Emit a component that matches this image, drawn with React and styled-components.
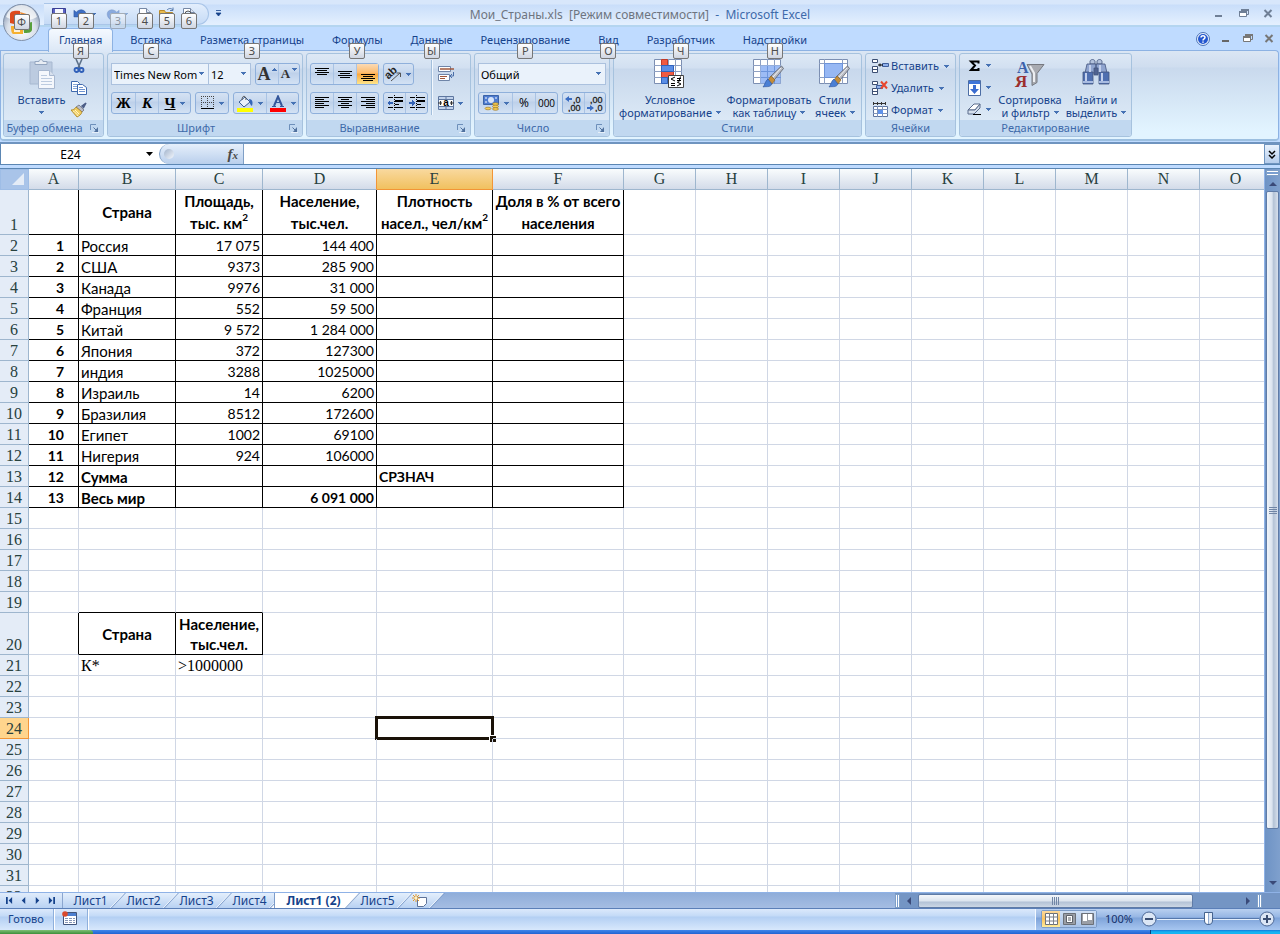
// src/App.jsx
import React from 'react';
import styled, { createGlobalStyle, css } from 'styled-components';

const GlobalStyle = createGlobalStyle`
  * {
    box-sizing: border-box;
  }

  body {
    margin: 0;
    overflow: hidden;
    font-family: 'Noto Sans', 'Open Sans', sans-serif;
    font-size: 11px;
    color: #15428b;
  }

  button, input, select {
    font: inherit;
    color: inherit;
    margin: 0;
    padding: 0;
    border: 0;
    background: none;
    outline: none;
  }

  svg {
    display: block;
    flex: none;
  }
`;

const Window = styled.div`
  position: relative;
  display: flex;
  flex-direction: column;
  height: 100vh;
  background: #bfdbff;
`;

/* ---------- title bar ---------- */

const TitleBar = styled.header`
  display: grid;
  grid-template-columns: 1fr auto 1fr;
  align-items: center;
  flex: none;
  height: 27px;
  padding: 2px 4px 0;
  background: linear-gradient(#d8e7fb 0 4px, #c9defa 5px, #e3effe 24px);
  border-bottom: 2px solid #b4d5f0;
`;

const TitleLeft = styled.div`
  display: flex;
  align-items: center;
  padding-left: 40px;
`;

const QuickAccess = styled.div`
  display: flex;
  gap: 6px;
  height: 22px;
  width: 165px;
  padding: 3px 0 0 7px;
  border: 1px solid #a9c5e8;
  border-left: 0;
  border-radius: 0 11px 11px 0;
  background: linear-gradient(#e3eefc, #c6dbf6);
`;

const QuickButton = styled.button`
  position: relative;
  display: flex;
  align-items: flex-start;
  width: ${({ $wide }) => ($wide ? '26px' : '16px')};
  opacity: ${({ disabled }) => (disabled ? 0.5 : 1)};

  > svg + svg {
    margin: 6px 0 0 3px;
  }
`;

const MoreButton = styled.button`
  padding: 4px;
  margin-left: 2px;
`;

const KeyTip = styled.kbd`
  position: absolute;
  top: ${({ $top }) => $top || 6}px;
  left: 50%;
  z-index: 3;
  width: 16px;
  height: 16px;
  margin-left: -8px;
  border: 1px solid #767676;
  border-radius: 2px;
  background: linear-gradient(#ffffff, #d0d6e2);
  color: #4c4c4c;
  font-family: 'Noto Sans', sans-serif;
  font-size: 11px;
  line-height: 14px;
  text-align: center;
`;

const WindowTitle = styled.h1`
  margin: 0;
  padding-top: 2px;
  font-size: 12px;
  font-weight: 400;
  line-height: 18px;
  white-space: pre;
  color: #6e7580;

  span {
    color: #3e6aaa;
  }
`;

const WindowControls = styled.div`
  display: flex;
  align-items: center;
  gap: ${({ $gap }) => $gap}px;
  margin-left: auto;
`;

const ControlButton = styled.button`
  width: 16px;
  height: 16px;
`;

const OfficeButton = styled.button`
  position: absolute;
  top: 2px;
  left: 2px;
  z-index: 4;
  width: 39px;
  height: 39px;
`;

/* ---------- ribbon ---------- */

const TabStrip = styled.nav`
  display: flex;
  flex: none;
  height: 23px;
  padding: 1px 3px 0 45px;
`;

const RibbonTab = styled.button`
  position: relative;
  z-index: 2;
  height: 24px;
  margin: 0 3px;
  padding: 0 10px 2px;
  line-height: 20px;
  border: 1px solid transparent;
  border-bottom: 0;
  border-radius: 4px 4px 0 0;
  white-space: nowrap;

  ${({ $active }) =>
    $active &&
    css`
      border-color: #8db2e3;
      background: linear-gradient(#f4f9ff, #dbe7f6);
    `}
`;

const Ribbon = styled.section`
  display: flex;
  gap: 3px;
  flex: none;
  height: 91px;
  margin-right: 1px;
  padding: 2px;
  border: 1px solid #8db2e3;
  border-radius: 0 4px 4px 4px;
  border-bottom: 2px solid #9cbfe0;
  background: linear-gradient(#dbe6f4, #cfddef 16px, #c9d9ed 17px, #e2f4ff 80px);
`;

const GroupBox = styled.div`
  display: flex;
  flex-direction: column;
  flex: none;
  width: ${({ $width }) => $width}px;
  border: 1px solid #a6c2de;
  border-radius: 3px;
  background: linear-gradient(#dde8f5, #d2e0f1 14px, #c8d8ec 15px, #dce9f6 68px);
`;

const GroupContent = styled.div`
  display: flex;
  flex: 1;
  min-height: 0;
`;

const GroupLabel = styled.div`
  display: flex;
  align-items: center;
  height: 16px;
  background: #c1d8f0;
  border-radius: 0 0 3px 3px;
  color: #3e6aaa;
  line-height: 18px;

  span {
    flex: 1;
    padding-right: ${({ $launcher }) => ($launcher ? '5px' : '0')};
    text-align: center;
    white-space: nowrap;
  }

  button {
    margin-right: 4px;
  }
`;

const Stack = styled.div`
  display: flex;
  flex-direction: column;
  gap: ${({ $gap }) => $gap || 0}px;
  padding: ${({ $padding }) => $padding || '9px 3px 0'};
`;

const Row = styled.div`
  display: flex;
  gap: 4px;
`;

const ButtonSet = styled.div`
  display: flex;
  height: 22px;
  border: 1px solid #8fb0db;
  border-radius: 3px;
  background: linear-gradient(#d5e2f3, #c7d8ee 8px, #bdd0ea 9px, #d3e2f4);
`;

const ToolButton = styled.button`
  display: flex;
  align-items: center;
  justify-content: center;
  gap: ${({ $gap }) => $gap || 4}px;
  width: ${({ $width }) => $width || 22}px;
  background: ${({ $active }) =>
    $active ? 'linear-gradient(#fbdab5, #fdbb6c 9px, #fba63c 10px, #fde58b)' : 'none'};

  & + & {
    border-left: 1px solid #a9c3e4;
  }
`;

const Glyph = styled.span`
  color: ${({ $color }) => $color || '#000'};
  font-family: ${({ $sans }) =>
    $sans ? "'Open Sans', sans-serif" : "'Liberation Serif', serif"};
  font-size: ${({ $size }) => $size || 15}px;
  font-weight: ${({ $sans }) => ($sans ? 400 : 700)};
  font-style: ${({ $italic }) => ($italic ? 'italic' : 'normal')};
  text-decoration: ${({ $underline }) => ($underline ? 'underline' : 'none')};
  line-height: 18px;
`;

const Raised = styled.span`
  align-self: flex-start;
  padding-top: 4px;
`;

const SelectBox = styled.div`
  position: relative;
  width: ${({ $width }) => $width}px;
  height: 22px;
  border: 1px solid #abc1de;
  background: #eaf2fb;

  & + & {
    margin-left: -5px;
  }

  select {
    display: block;
    width: 100%;
    height: 20px;
    padding: 0 8px 0 2px;
    appearance: none;
    color: #000;
  }

  svg {
    position: absolute;
    top: 8px;
    right: 4px;
    pointer-events: none;
  }
`;

const Separator = styled.div`
  width: 2px;
  margin: 6px 0 5px;
  background: #a3bfdc;
  border-right: 1px solid #f2f8fe;
`;

const PlainButton = styled.button`
  display: flex;
  align-items: center;
  gap: ${({ $gap }) => $gap || 4}px;
  height: 22px;
  line-height: 22px;
  white-space: nowrap;
`;

const BigButton = styled.button`
  display: flex;
  flex-direction: column;
  align-items: center;
  flex: none;
  width: ${({ $width }) => $width}px;
  padding-top: 5px;
  line-height: 13px;
  white-space: nowrap;

  > svg {
    margin-bottom: 3px;
  }
`;

const CaptionLine = styled.span`
  display: flex;
  align-items: center;
  gap: 4px;
  height: 13px;
`;

/* ---------- formula bar ---------- */

const FormulaBar = styled.div`
  display: flex;
  flex: none;
  height: 23px;
  margin-top: 1px;
  border-top: 2px solid #6f94bf;
  border-bottom: 1px solid #5b86b3;
  background: #fff;
`;

const NameBox = styled.div`
  display: flex;
  align-items: center;
  width: 159px;
  border-left: 1px solid #5b86b3;

  input {
    width: 139px;
    text-align: center;
    font-size: 12px;
    color: #000;
  }

  button {
    padding: 6px;
  }
`;

const FunctionPill = styled.div`
  display: flex;
  align-items: center;
  justify-content: space-between;
  width: 85px;
  padding: 0 5px 0 4px;
  border: 1px solid #7f9fc6;
  border-width: 0 1px 0 1px;
  border-radius: 10px 0 0 10px;
  background: linear-gradient(#e6effb, #b9cfec);
`;

const Knob = styled.span`
  width: 10px;
  height: 10px;
  border-radius: 50%;
  background: linear-gradient(135deg, #a2b3cb, #f4f8fd);
`;

const FxButton = styled.button`
  font-family: 'Liberation Serif', serif;
  font-size: 15px;
  font-style: italic;
  font-weight: 700;
  line-height: 18px;
  color: #4a4a4a;

  small {
    font-size: 11px;
  }
`;

const FormulaInput = styled.input`
  flex: 1;
  min-width: 0;
`;

const ExpandButton = styled.button`
  display: flex;
  align-items: center;
  justify-content: center;
  width: 16px;
  border: 1px solid #6f94bf;
  background: linear-gradient(#e9f2fd, #b5cdec);
`;

/* ---------- sheet ---------- */

const SheetArea = styled.main`
  display: flex;
  flex: 1;
  min-height: 0;
  margin-top: 3px;
  border-top: 1px solid #5b86b3;
`;

const SheetView = styled.div`
  flex: 1;
  min-width: 0;
  overflow: hidden;
  background: #fff;
`;

/* the last column runs a little under the scroll bar */
const SheetTable = styled.table`
  width: calc(100% + 8px);
  table-layout: fixed;
  border-spacing: 0;
  color: #000;
  font-family: Lato, 'Open Sans', sans-serif;
  font-size: 14px;
`;

const headText = css`
  padding: 0;
  font-family: 'Liberation Serif', serif;
  font-size: 16px;
  font-weight: 400;
  color: #27413e;
`;

const ColumnHead = styled.th`
  ${headText}
  height: 21px;
  line-height: 20px;
  border-right: 1px solid ${({ $active }) => ($active ? '#f29536' : '#9eb6ce')};
  border-bottom: 1px solid ${({ $active }) => ($active ? '#f29536' : '#9eb6ce')};
  background: ${({ $active }) =>
    $active ? 'linear-gradient(#f9d99f, #f1c15f)' : 'linear-gradient(#f9fcfd, #d3dbe9)'};
  ${({ $beforeActive }) => $beforeActive && 'border-right-color: #f29536;'}
`;

const Corner = styled.th`
  height: 21px;
  padding: 0 4px 2px 0;
  border: 1px solid #9ebde6;
  background: #a9c4e9;

  svg {
    margin-left: auto;
  }
`;

const RowHead = styled.th`
  ${headText}
  height: ${({ $height }) => $height}px;
  line-height: 19px;
  vertical-align: bottom;
  border-right: 1px solid ${({ $active }) => ($active ? '#f29536' : '#9eb6ce')};
  border-bottom: 1px solid ${({ $active }) => ($active ? '#f29536' : '#9eb6ce')};
  background: ${({ $active }) => ($active ? '#ffd58d' : '#e4ecf7')};
`;

const Cell = styled.td`
  position: relative;
  padding: 0 2px;
  line-height: ${({ $line }) => $line || 18}px;
  vertical-align: ${({ $head }) => ($head ? 'middle' : 'bottom')};
  text-align: ${({ $align }) => $align || 'left'};
  font-weight: ${({ $bold }) => ($bold ? 700 : 400)};
  white-space: ${({ $head }) => ($head ? 'pre' : 'nowrap')};
  border-right: 1px solid ${({ $right }) => ($right ? '#000' : '#d0d7e5')};
  border-bottom: 1px solid ${({ $bottom }) => ($bottom ? '#000' : '#d0d7e5')};
  ${({ $indent }) => $indent && 'padding-right: 14px;'}
  ${({ $large }) => $large && 'font-size: 15px;'}
  ${({ $serif }) =>
    $serif && "font-family: 'Liberation Serif', serif; font-size: 16px;"}

  sup {
    font-size: 10px;
    line-height: 0;
    vertical-align: 8px;
  }
`;

const Selection = styled.div`
  position: absolute;
  inset: -2px;
  border: 3px solid #1a1208;

  &::after {
    content: '';
    position: absolute;
    right: -5px;
    bottom: -5px;
    width: 6px;
    height: 6px;
    background: #1a1208;
    background-clip: padding-box;
    border: solid #fff;
    border-width: 1px 0 0 1px;
  }
`;

/* ---------- scroll bars ---------- */

const VerticalBar = styled.div`
  display: flex;
  flex-direction: column;
  width: 16px;
  padding: 1px 0 2px 1px;
  border-left: 1px solid #8fb2e6;
  background: linear-gradient(90deg, #6e93c5, #7fa0cd);
`;

const SplitHandle = styled.span`
  flex: none;
  border: 1px solid #7f9fc6;
  background: linear-gradient(#fff 1px, #7a9fd0 1px 3px, #fff 3px);
  height: ${({ $vertical }) => ($vertical ? '14px' : '6px')};
  width: ${({ $vertical }) => ($vertical ? '5px' : '13px')};
  ${({ $vertical }) =>
    $vertical && 'background: linear-gradient(90deg, #fff 1px, #7a9fd0 1px 2px, #fff 2px);'}
`;

const ScrollArrow = styled.button`
  display: flex;
  align-items: center;
  justify-content: center;
  flex: none;
  width: ${({ $horizontal }) => ($horizontal ? '18px' : '14px')};
  height: 15px;
`;

const VerticalThumb = styled.div`
  display: flex;
  align-items: center;
  justify-content: center;
  flex: 638 0 0;
  width: 13px;
  border: 1px solid #5f7ba6;
  border-radius: 2px;
  background: linear-gradient(90deg, #f1f5fa, #dbe4ef 45%, #b4c3d6 60%, #d7e0ec);
`;

const VerticalTrack = styled.div`
  flex: 46 0 0;
`;

const BottomBar = styled.div`
  display: flex;
  flex: none;
  height: 17px;
  border-top: 1px solid #8fb2e6;
  border-bottom: 1px solid #5b7fb8;
  background: linear-gradient(#8fadd9, #a5bde3);
`;

const SheetNav = styled.div`
  position: relative;
  z-index: 2;
  display: flex;
  align-items: center;
  width: 63px;
  padding: 0 3px;
  border-right: 1px solid #8ba6cf;
  background: linear-gradient(#e0ecfb, #b9d2f3);

  button {
    width: 14px;
    padding-left: 3px;
  }
`;

const SheetTabs = styled.div`
  display: flex;
  padding-left: 3px;
`;

const SheetTab = styled.button`
  position: relative;
  z-index: ${({ $active }) => ($active ? 1 : 0)};
  width: ${({ $width }) => $width || 53}px;
  padding-right: 4px;
  font-size: 12px;
  line-height: 15px;
  font-weight: ${({ $active }) => ($active ? 700 : 400)};
  text-align: center;
  white-space: nowrap;

  &::before {
    content: '';
    position: absolute;
    inset: 0 0 0 ${({ $first }) => ($first ? '-14px' : '0')};
    z-index: -1;
    transform: skewX(-43deg);
    border-right: 1px solid #7d9cc9;
    background: ${({ $active }) =>
      $active ? '#fff' : 'linear-gradient(#e4effc, #b8d1f2)'};
    box-shadow: inset -1px 0 #fff;
  }

  ${({ $active }) =>
    $active &&
    css`
      &::after {
        content: '';
        position: absolute;
        inset: 0 auto 0 -4px;
        z-index: -1;
        width: 13px;
        border-left: 1px solid #7d9cc9;
        background: #fff;
      }
    `}

  svg {
    margin: 0 auto;
  }
`;

const HorizontalBar = styled.div`
  display: flex;
  align-items: center;
  width: 385px;
  margin-left: auto;
  background: #7495c4;
`;

const HorizontalThumb = styled.div`
  display: flex;
  align-items: center;
  justify-content: center;
  flex: 276 0 0;
  height: 14px;
  border: 1px solid #5f7ba6;
  border-radius: 2px;
  background: linear-gradient(#f4f7fb, #dce4ee 6px, #b3c2d6 7px, #ccd7e5);
`;

const HorizontalTrack = styled.div`
  flex: 46 0 0;
`;

/* ---------- status bar ---------- */

const StatusBar = styled.footer`
  display: flex;
  align-items: stretch;
  flex: none;
  height: 21px;
  background: linear-gradient(#dce9fb, #c3daf7 7px, #b3cff3 8px, #d8e8fc);
  line-height: 18px;
`;

const StatusItem = styled.div`
  display: flex;
  align-items: center;
  padding: 0 9px 2px 8px;
  border-right: 1px solid #8fb0dc;
  box-shadow: 1px 0 #fff;
`;

const StatusRight = styled.div`
  display: flex;
  align-items: center;
  width: 245px;
  margin-left: auto;
  padding: 0 5px 2px;
  border-left: 1px solid #f4f9ff;
  background: linear-gradient(#b9d0f0, #96b6e4 8px, #7ea3d9 9px, #a7c6f0);
`;

const ViewButtons = styled.div`
  display: flex;
  height: 18px;
  border: 1px solid #7c9cc8;
  border-radius: 2px;
`;

const ViewButton = styled.button`
  display: flex;
  align-items: center;
  justify-content: center;
  width: 18px;
  background: ${({ $active }) =>
    $active ? 'linear-gradient(#fbd89d, #fbc45f 8px, #fdeb9b)' : 'linear-gradient(#cfdff4, #a9c3e8)'};
`;

const ZoomValue = styled.button`
  width: 44px;
  color: #15326b;
`;

const ZoomSlider = styled.input`
  flex: 1;
  min-width: 0;
  height: 16px;
  appearance: none;
  background: linear-gradient(transparent 7px, #5678ac 7px 8px, #e4effc 8px 9px, transparent 9px);

  &::-webkit-slider-thumb {
    appearance: none;
    width: 9px;
    height: 13px;
    border: 1px solid #46648f;
    border-radius: 1px 1px 5px 5px;
    background: linear-gradient(90deg, #fff 3px, #8fa9cf 3px 4px, #dfe9f6 4px);
  }
`;

const TaskStrip = styled.div`
  display: flex;
  flex: none;
  height: 4px;
  background: linear-gradient(#3f86ea, #2163d2);

  &::before {
    content: '';
    width: 93px;
    border-radius: 0 3px 0 0;
    background: linear-gradient(#7fbf77, #3c8f3a);
  }

  &::after {
    content: '';
    width: 129px;
    margin-left: auto;
    border-left: 1px solid #0a3f7c;
    background: linear-gradient(#1379d9, #15b4f2 2px);
  }
`;

/* ---------- icons ---------- */

const Arrow = ({ up }) => (
  <svg width="5" height="3" viewBox="0 0 5 3" shapeRendering="crispEdges">
    <path d={up ? 'M0 3h5V2H4V1H3V0H2v1H1v1H0z' : 'M0 0h5v1H4v1H3v1H2V2H1V1H0z'} fill="#4672b4" />
  </svg>
);

const Launcher = () => (
  <svg width="9" height="9" viewBox="0 0 9 9" fill="none">
    <path d="M.5 6V.5H6" stroke="#6d8fba" />
    <path d="M3.500 3.500l3 3" stroke="#50719e" />
    <path d="M4 8h4V3z" fill="#50719e" />
    <path d="M2 8.500h7" stroke="#fff" opacity=".6" />
  </svg>
);

const WinIcon = ({ kind, color = '#6f7f96' }) => (
  <svg width="16" height="16" viewBox="0 0 16 16" fill="none">
    {kind === 'min' && <path d="M5 10h7" stroke={color} strokeWidth="2" />}
    {kind === 'restore' && (
      <>
        <path d="M6.500 5V4.500h7v4H12" stroke={color} />
        <path d="M6 4h8" stroke={color} strokeWidth="2" />
        <path d="M4.500 6.500h7v4h-7z" fill="#fff" stroke={color} />
        <path d="M4 6h8" stroke={color} strokeWidth="2" />
      </>
    )}
    {kind === 'close' && <path d="M4.500 4l7 7M11.500 4l-7 7" stroke={color} strokeWidth="2" />}
  </svg>
);

const HelpIcon = () => (
  <svg width="16" height="16" viewBox="0 0 16 16">
    <circle cx="8" cy="8" r="6.500" fill="#e6effb" stroke="#4d74b8" />
    <circle cx="8" cy="8" r="5" fill="#2457cf" />
    <path d="M6 6.500c0-2.500 4-2.500 4 0 0 1.500-2 1.300-2 3M8 10.500v1.200" stroke="#fff" strokeWidth="1.500" fill="none" />
  </svg>
);

const OfficeLogo = () => (
  <svg width="39" height="39" viewBox="0 0 39 39">
    <defs>
      <radialGradient id="orb" cx="50%" cy="70%" r="65%">
        <stop offset="0" stopColor="#ffffff" />
        <stop offset=".6" stopColor="#d9e0ea" />
        <stop offset="1" stopColor="#8a9ab3" />
      </radialGradient>
    </defs>
    <circle cx="19.500" cy="20.500" r="18" fill="url(#orb)" stroke="#7f8fa8" />
    <path d="M4 15a16 16 0 0 1 31 0c-9 5-22 5-31 0z" fill="#fff" opacity=".75" />
    <path d="M8 12c0-3 5-4 10-3v7l-6 6-4-1z" fill="#dd4a1c" />
    <path d="M18 10l10 3v7h-7z" fill="#f08b2e" />
    <path d="M9 24h12v8H11c-2-1-2-5-2-8z" fill="#f6b02f" />
    <path d="M21 22l9-2v8c-1 3-4 3-8 3z" fill="#58a03c" />
    <path d="M12 25h6v5h-6zM23 24h4v4h-4z" fill="#fff" opacity=".8" />
  </svg>
);

const SaveIcon = () => (
  <svg width="16" height="16" viewBox="0 0 16 16">
    <path d="M1.500 1.500h13v13h-13z" fill="#5a62c4" stroke="#3a3f94" />
    <path d="M4 2h8v6H4z" fill="#f5f7ff" />
    <path d="M4 10h8v4H4z" fill="#c9cff0" />
  </svg>
);

const UndoIcon = ({ flip }) => (
  <svg width="15" height="16" viewBox="0 0 16 16">
    <g transform={flip ? 'translate(16 0) scale(-1 1)' : undefined}>
      <path d="M1 3v7h7L5.500 7.500C8 4.500 12 6 11 10l-1 3c5-3 5-10-1-10.500-2.500 0-4 1-5.500 2.500z" fill="#3f6fc4" stroke="#2c559f" strokeWidth=".6" />
    </g>
  </svg>
);

const PageIcon = ({ lens }) => (
  <svg width="16" height="16" viewBox="0 0 16 16">
    <path d="M2.500 1.500h7l4 4v9h-11z" fill="#fff" stroke="#7688a5" />
    <path d="M9.500 1.500v4h4" fill="#dfe6f2" stroke="#7688a5" />
    {lens && <circle cx="7" cy="7" r="3" fill="#dcebfb" stroke="#555" />}
  </svg>
);

const FolderIcon = () => (
  <svg width="16" height="16" viewBox="0 0 16 16">
    <path d="M.5 3.500h5l1 2h7v9H.5z" fill="#e9bb50" stroke="#b98a2a" />
    <path d="M.5 14.500l2.500-7h12.500l-2.500 7z" fill="#fbe08f" stroke="#b98a2a" />
    <path d="M8 3c2-2 4-2 6 0m0-2.500V3.500h-3" stroke="#5579ae" fill="none" />
  </svg>
);

const PasteIcon = () => (
  <svg width="28" height="31" viewBox="0 0 28 31">
    <path d="M2 3h22v22H2z" fill="#bccbe0" stroke="#a7b8d0" />
    <path d="M7 2.500h4c0-2.500 4-2.500 4 0h4v3H7z" fill="#e8edf4" stroke="#93a5bf" />
    <path d="M10.500 11.500h11l5 5v13h-16z" fill="#f4f7fc" stroke="#a8b8d0" />
    <path d="M21.500 11.500v5h5" fill="#d8e1ee" stroke="#a8b8d0" />
    <path d="M13 16.500h6M13 19.500h11M13 22.500h11M13 25.500h11" stroke="#bccbe0" />
  </svg>
);

const CutIcon = () => (
  <svg width="16" height="16" viewBox="0 0 16 16" fill="none">
    <path d="M5 1l4 9M11 1L7 10" stroke="#5c7089" strokeWidth="1.600" />
    <circle cx="5.500" cy="12" r="2" stroke="#2f5fb8" strokeWidth="1.800" />
    <circle cx="10.500" cy="12" r="2" stroke="#2f5fb8" strokeWidth="1.800" />
  </svg>
);

const CopyIcon = () => (
  <svg width="16" height="16" viewBox="0 0 16 16">
    <path d="M.5 1.500h6l2 2v8h-8z" fill="#fff" stroke="#3f69ad" />
    <path d="M2 4.500h4M2 6.500h5M2 8.500h5" stroke="#86a6d6" />
    <path d="M6.500 4.500h5l4 3v7h-9z" fill="#fff" stroke="#3f69ad" />
    <path d="M8 7.500h4M8 9.500h6M8 11.500h6" stroke="#6f94d0" />
  </svg>
);

const BrushIcon = () => (
  <svg width="16" height="16" viewBox="0 0 16 16">
    <path d="M15 1l-4 3 1.500 1.500z" fill="#4c5d86" stroke="#4c5d86" strokeWidth="1.500" />
    <path d="M8 3l5 5-2 2-6-5z" fill="#b9bcc8" stroke="#6f7480" strokeWidth=".8" />
    <path d="M5 5l6 5c-1 3-3 4-5 5L0 8c2 0 4-1 5-3z" fill="#f0cd62" stroke="#a8821f" strokeWidth=".8" />
    <path d="M2 9c2 1 4 3 5 5M4 8l4 4" stroke="#fff5c4" fill="none" />
  </svg>
);

const BorderIcon = () => (
  <svg width="14" height="14" viewBox="0 0 14 14">
    <path d="M.5 0v12M6.500 0v12M12.500 0v12M0 .5h13M0 6.500h13" stroke="#444" strokeDasharray="1 1" />
    <path d="M0 12.500h13" stroke="#000" />
  </svg>
);

const FillIcon = () => (
  <svg width="17" height="17" viewBox="0 0 17 17">
    <path d="M2 7l6-5 5 5-6 5z" fill="#e9f0fa" stroke="#3c5d91" />
    <path d="M5 5c0-5 4-5 4 0" fill="none" stroke="#555" />
    <path d="M12 4c4 0 4 4 3 7-2-1-2-3-3-7z" fill="#3566b8" />
    <path d="M0 13h16v4H0z" fill="#ffff00" />
  </svg>
);

const FontColorIcon = () => (
  <svg width="17" height="17" viewBox="0 0 17 17">
    <path d="M4 11l4-9.500 4 9.500" stroke="#34579b" strokeWidth="2" fill="none" />
    <path d="M5.500 7.500h5M2 11.500h4M10 11.500h4" stroke="#34579b" fill="none" />
    <path d="M0 13h16v4H0z" fill="#ff0000" />
  </svg>
);

const LinesIcon = ({ lines, offset = 0 }) => (
  <svg width="14" height="16" viewBox="0 0 14 16" shapeRendering="crispEdges">
    {lines.map(([x, w], i) => (
      <rect key={i} x={x} y={offset + i * 2} width={w} height="1" fill="#000" />
    ))}
  </svg>
);

const IndentIcon = ({ right }) => (
  <svg width="16" height="16" viewBox="0 0 16 16" shapeRendering="crispEdges">
    <path d="M1 2.500h5M8 2.500h8M8 9.500h4M8 12.500h8M1 12.500h5" stroke="#000" />
    <path d="M8 6h8" stroke="#000" strokeWidth="2" />
    <path d="M7.500 0v16" stroke="#000" strokeDasharray="1 1" />
    <path d={right ? 'M0 7h3V5l3 3-3 3V9H0z' : 'M6 7H3V5L0 8l3 3V9h3z'} fill="#3262b5" />
  </svg>
);

const OrientationIcon = () => (
  <svg width="16" height="16" viewBox="0 0 16 16" overflow="visible">
    <text x="1" y="12" transform="rotate(-45 4 11)" fontFamily="Liberation Sans, sans-serif" fontSize="11" fontWeight="700" fill="#222">ab</text>
    <path d="M5 15l9-8M14.500 7h-4M14.500 7v4" stroke="#555" fill="none" />
  </svg>
);

const WrapIcon = () => (
  <svg width="17" height="16" viewBox="0 0 17 16" fill="none">
    <path d="M.5 .5h12v5H.5z" fill="#fff" stroke="#6f85a8" />
    <path d="M2 3h14" stroke="#a0583c" strokeWidth="1.500" />
    <path d="M.5 8.500h11v6H.5z" fill="#fff" stroke="#6f85a8" />
    <path d="M2 10.500h7M2 12.500h5" stroke="#a0583c" />
    <path d="M15.500 6v4h-3m1.500-2l-2 2 2 2" stroke="#4a6ea8" />
  </svg>
);

const MergeIcon = () => (
  <svg width="16" height="16" viewBox="0 0 16 16">
    <path d="M.5 1.500h15v13H.5z" fill="#fff" stroke="#5e77a0" />
    <path d="M1 2h14v2H1zM1 12h14v2H1z" fill="#c2d3ec" />
    <path d="M1 4.500h14M1 11.500h14M8 1v3M8 12v3" stroke="#5e77a0" />
    <path d="M0 8h4M2.500 6v4M12 8h4M13.500 6v4" stroke="#333" strokeWidth="1.200" />
    <text x="8" y="11" textAnchor="middle" fontFamily="Liberation Sans, sans-serif" fontSize="10" fontWeight="700" fill="#000">a</text>
  </svg>
);

const MoneyIcon = () => (
  <svg width="17" height="16" viewBox="0 0 17 16">
    <path d="M.5 .5h15v9H.5z" fill="#4f7cd0" stroke="#3b63a8" />
    <circle cx="8" cy="5" r="3" fill="#d6e4fa" />
    <path d="M2 3h2M12 3h2M2 7h2" stroke="#fff" />
    <ellipse cx="12.500" cy="9" rx="3" ry="1.300" fill="#f8cf57" stroke="#99701a" strokeWidth=".6" />
    <ellipse cx="12.500" cy="11.500" rx="3" ry="1.300" fill="#f8cf57" stroke="#99701a" strokeWidth=".6" />
    <ellipse cx="12.500" cy="14" rx="3" ry="1.300" fill="#f8cf57" stroke="#99701a" strokeWidth=".6" />
    <ellipse cx="5" cy="13.500" rx="3" ry="1.300" fill="#f8cf57" stroke="#99701a" strokeWidth=".6" />
  </svg>
);

const DecimalIcon = ({ less }) => (
  <svg width="17" height="17" viewBox="0 0 17 17" fontFamily="Liberation Sans, sans-serif" fontSize="9">
    <text x={less ? 3 : 8} y="8" fill="#222" stroke="#222" strokeWidth=".3">{less ? ',00' : ',0'}</text>
    <text x={less ? 8 : 3} y="16" fill="#222" stroke="#222" strokeWidth=".3">{less ? ',0' : ',00'}</text>
    <path d={less ? 'M0 12h3v-2l4 3-4 3v-2H0z' : 'M7 3H4V1L0 4l4 3V5h3z'} fill="#3a6cc2" />
  </svg>
);

const GridBase = () => (
  <>
    <path d="M.5 .5h27v24H.5z" fill="#fff" stroke="#7c8fb2" />
    <path d="M7.500 0v25M14.500 0v25M21.500 0v25M0 6.500h28M0 12.500h28M0 18.500h28" stroke="#8ea0c2" />
  </>
);

const PaintBrush = () => (
  <>
    <path d="M28.500 7l2 2.500-9 11-4-3z" fill="#b9bcc4" stroke="#5a5d66" strokeWidth=".8" />
    <path d="M28 9l-8 9" stroke="#f2f3f5" />
    <path d="M18 17l4 4-3 4-4-4z" fill="#c58d3a" stroke="#8a5e1e" strokeWidth=".6" />
    <path d="M15 20l4 5c-2 4-6 2-9 3 2-2 2-6 5-8z" fill="#4b7fd4" stroke="#2b539c" strokeWidth=".6" />
  </>
);

const ConditionalIcon = () => (
  <svg width="32" height="31" viewBox="0 0 32 31">
    <GridBase />
    <path d="M7.500 .5h6v6h-6zM7.500 12.500h12v6h-12z" fill="#ef5a42" stroke="#c33a26" />
    <path d="M7.500 6.500h12v6h-12zM7.500 18.500h6v6h-6z" fill="#5a8ee6" stroke="#2f62bd" />
    <path d="M14.500 16.500h15v12h-15z" fill="#fff" stroke="#444" />
    <path d="M21 18l-4 2 4 2M17 24.500h4M17 26.500h4M23 19.500h4M23 21.500h4M26.500 17.500l-2 6M23 23l4 2-4 2" stroke="#000" fill="none" />
  </svg>
);

const FormatTableIcon = () => (
  <svg width="32" height="31" viewBox="0 0 32 31">
    <GridBase />
    <path d="M7.500 6.500h20v18h-20z" fill="#9dbcf5" />
    <path d="M14.500 7v18M21.500 7v18M8 12.500h20M8 18.500h20" stroke="#6d95dc" />
    <PaintBrush />
  </svg>
);

const CellStyleIcon = () => (
  <svg width="32" height="31" viewBox="0 0 32 31">
    <path d="M.5 .5h28v24H.5z" fill="#fff" stroke="#7c8fb2" />
    <path d="M5.500 0v25M23.500 0v25M0 4.500h28M0 18.500h28" stroke="#8ea0c2" />
    <path d="M5.500 4.500h18v14h-18z" fill="#97b8f4" stroke="#6d93d8" />
    <PaintBrush />
  </svg>
);

const CellsIcon = ({ kind }) => (
  <svg width="17" height="16" viewBox="0 0 17 16" fill="none">
    {kind === 'format' ? (
      <>
        <path d="M1.500 4.500h14v10h-14z" fill="#fff" stroke="#5c74a0" />
        <path d="M5.500 4v11M10.500 4v11M1 7.500h15M1 11.500h15" stroke="#7d92b8" />
        <path d="M6 8h5v4H6z" fill="#5f92ea" />
        <path d="M1.500 0v3M5.500 0v3M9.500 0v3M13.500 0v3M1 1.500h13" stroke="#333" />
      </>
    ) : (
      <>
        <path d="M.5 1.500h5v3h-5zM.5 8.500h5v6h-5zM.5 11.500h5" fill="#fff" stroke="#3d4f73" />
        <path d={kind === 'insert' ? 'M10.500 5.500h6v3h-6z' : 'M4.500 5.500h6v3h-6z'} fill="#8fb0ea" stroke="#3f5f9c" />
        {kind === 'insert' ? (
          <path d="M6 7h5M8 5.500v3" stroke="#000" />
        ) : (
          <path d="M9 1.500l6 7M15 1.500l-6 7" stroke="#e8462e" strokeWidth="2" />
        )}
      </>
    )}
  </svg>
);

const SumIcon = () => (
  <svg width="15" height="14" viewBox="0 0 15 14">
    <path d="M11.500 4.500V2.500H4L8 6.500 4 11h7.500V9" fill="none" stroke="#000" strokeWidth="2" />
  </svg>
);

const FillDownIcon = () => (
  <svg width="15" height="16" viewBox="0 0 15 16">
    <path d="M1.500 .5h12v15h-12z" fill="#fff" stroke="#4c6da5" />
    <path d="M2 1h11v3H2z" fill="#3f75d8" />
    <path d="M6 5h3v4h3l-4.500 5L3 9h3z" fill="#3a6cd0" />
  </svg>
);

const EraserIcon = () => (
  <svg width="15" height="14" viewBox="0 0 15 14">
    <path d="M1 8l6-6h6l-5 6z" fill="#fff" stroke="#5a6c8c" />
    <path d="M1 8v4h6l6-6V2L8 8z" fill="#d5dfec" stroke="#5a6c8c" />
    <path d="M6 12.500h8" stroke="#000" />
  </svg>
);

const SortIcon = () => (
  <svg width="32" height="31" viewBox="0 0 32 31">
    <path d="M13 5.500h17l-7 9v9l-5 3V15z" fill="#a9abb1" stroke="#75787f" />
    <path d="M16 7l4 7v9" stroke="#eceef1" strokeWidth="2" fill="none" />
    <text x="3" y="14" fontFamily="Liberation Serif, serif" fontSize="16" fontWeight="700" fill="#3d62ab">А</text>
    <text x="1" y="28" fontFamily="Liberation Serif, serif" fontSize="17" fontWeight="700" fill="#9c2f2f">Я</text>
  </svg>
);

const BinocularsIcon = () => (
  <svg width="30" height="31" viewBox="0 0 30 31">
    <g stroke="#44567f" strokeWidth=".8">
      <path d="M9 2c1-2 4-2 5 0v3H9zM16 2c1-2 4-2 5 0v3h-5z" fill="#b3c2dd" />
      <path d="M6 5h9v9H4zM15 5h9l2 9H15z" fill="#8fa4cf" />
      <path d="M13 9h4v7h-4z" fill="#4f6290" />
      <path d="M2 13h10v12H2zM18 13h10v12H18z" fill="#4f6fb0" />
    </g>
    <path d="M5 14v10M21 14v10M9 6v7M19 6v7" stroke="#c3d0ec" strokeWidth="2" />
    <path d="M2 23h10M18 23h10" stroke="#a9bce2" strokeWidth="2" />
  </svg>
);

const Grip = ({ vertical }) => (
  <svg width="8" height="8" viewBox="0 0 8 8">
    <path d={vertical ? 'M0 1.500h8M0 3.500h8M0 5.500h8M0 7.500h8' : 'M.5 0v8M2.500 0v8M4.500 0v8M6.500 0v8'} stroke="#7186a6" />
  </svg>
);

const Triangle = ({ points, color = '#3a4a78', size = 8 }) => (
  <svg width={size} height={size} viewBox="0 0 8 8">
    <path d={points} fill={color} />
  </svg>
);

const ZoomIcon = ({ plus }) => (
  <svg width="16" height="16" viewBox="0 0 16 16">
    <circle cx="8" cy="8" r="7" fill="#dbe6f5" stroke="#4c6896" />
    <path d={plus ? 'M4 8h8M8 4v8' : 'M4 8h8'} stroke="#3b4e72" strokeWidth="2" />
  </svg>
);

const ViewIcon = ({ kind }) => (
  <svg width="13" height="12" viewBox="0 0 13 12" fill="none">
    <path d="M.5.5h12v11H.5z" fill={kind === 'grid' ? '#fff' : '#9a9ea6'} stroke="#6b7078" />
    {kind === 'grid' && <path d="M4.500 0v12M8.500 0v12M0 4h13M0 8h13" stroke="#7a7f88" />}
    {kind === 'page' && <path d="M3.500 2.500h6v7h-6zM5 5h3M5 7h3" fill="#fff" stroke="#5d626a" />}
    {kind === 'break' && <path d="M2 1h4v7H2zM7 1h4v6H7z" fill="#fff" />}
  </svg>
);

const MacroIcon = () => (
  <svg width="16" height="15" viewBox="0 0 16 15">
    <path d="M1.500 1.500h13v12h-13z" fill="#fff" stroke="#41557a" />
    <path d="M5 2h9v3H5z" fill="#4d7fd0" />
    <path d="M3 7.500h3M7 7.500h3M11 7.500h2M3 9.500h3M7 9.500h3M11 9.500h2M3 11.500h3M7 11.500h3M11 11.500h2" stroke="#8595b5" />
    <circle cx="3" cy="3" r="2.800" fill="#d9482b" />
  </svg>
);

const NewSheetIcon = () => (
  <svg width="16" height="14" viewBox="0 0 16 14">
    <path d="M5.500 3.500h9v6l-3 3h-6z" fill="#fff" stroke="#5f7399" />
    <path d="M4 0v8M0 4h8M1 1l6 6M7 1L1 7" stroke="#e2972a" />
    <circle cx="4" cy="4" r="1.500" fill="#fff3c4" />
  </svg>
);

/* ---------- data ---------- */

const tabs = [
  ['Главная', 'Я'],
  ['Вставка', 'С'],
  ['Разметка страницы', 'З'],
  ['Формулы', 'У'],
  ['Данные', 'Ы'],
  ['Рецензирование', 'Р'],
  ['Вид', 'О'],
  ['Разработчик', 'Ч'],
  ['Надстройки', 'Н'],
];

const columns = 'ABCDEFGHIJKLMNO'.split('');
const columnWidths = [50, 97, 87, 114, 116, 131, 72, 72, 72, 72, 72, 72, 72, 72];

const countries = [
  ['1', 'Россия', '17 075', '144 400'],
  ['2', 'США', '9373', '285 900'],
  ['3', 'Канада', '9976', '31 000'],
  ['4', 'Франция', '552', '59 500'],
  ['5', 'Китай', '9 572', '1 284 000'],
  ['6', 'Япония', '372', '127300'],
  ['7', 'индия', '3288', '1025000'],
  ['8', 'Израиль', '14', '6200'],
  ['9', 'Бразилия', '8512', '172600'],
  ['10', 'Египет', '1002', '69100'],
  ['11', 'Нигерия', '924', '106000'],
  ['12', 'Сумма', '', '', 'СРЗНАЧ'],
  ['13', 'Весь мир', '', '6 091 000'],
];

const headings = {
  B1: 'Страна',
  C1: <>Площадь,{'\n'}тыс. км<sup>2</sup></>,
  D1: 'Население,\nтыс.чел.',
  E1: <>Плотность{'\n'}насел., чел/км<sup>2</sup></>,
  F1: 'Доля в % от всего\nнаселения',
  B20: 'Страна',
  C20: 'Население,\nтыс.чел.',
};

const rowHeights = { 1: 45, 20: 42 };

const getCell = (col, row) => {
  const c = columns.indexOf(col);
  const props = {};
  let value = '';

  if (headings[col + row]) {
    value = headings[col + row];
    Object.assign(props, {
      $head: true,
      $bold: true,
      $large: true,
      $align: 'center',
      $line: row === 1 ? 22 : 20,
    });
  } else if (row >= 2 && row <= 14) {
    value = countries[row - 2][c] || '';
    props.$bold = c === 0 || row > 12;
    props.$large = c === 1;
    props.$align = c === 0 || c === 2 || c === 3 ? 'right' : 'left';
    props.$indent = c === 0;
  } else if (row === 21 && (c === 1 || c === 2)) {
    value = c === 1 ? 'К*' : '>1000000';
    props.$serif = true;
  }

  if (row <= 14 && c <= 5) {
    props.$right = true;
    props.$bottom = true;
  }
  if (row === 20 && c <= 2) props.$right = true;
  if ((row === 19 || row === 20) && (c === 1 || c === 2)) props.$bottom = true;

  return { value, props };
};

/* ---------- parts ---------- */

const Group = ({ label, width, launcher, children }) => (
  <GroupBox $width={width}>
    <GroupContent>{children}</GroupContent>
    <GroupLabel $launcher={launcher}>
      <span>{label}</span>
      {launcher && (
        <button aria-label={label}>
          <Launcher />
        </button>
      )}
    </GroupLabel>
  </GroupBox>
);

const Combo = ({ label, value, width }) => (
  <SelectBox $width={width}>
    <select aria-label={label} defaultValue={value}>
      <option>{value}</option>
    </select>
    <Arrow />
  </SelectBox>
);

const Big = ({ icon, lines, width }) => (
  <BigButton $width={width}>
    {icon}
    <span>{lines[0]}</span>
    <CaptionLine>
      {lines[1]}
      <Arrow />
    </CaptionLine>
  </BigButton>
);

const wide = [[0, 14], [2, 10], [0, 14], [2, 10]];

const RibbonGroups = () => (
  <Ribbon>
    <Group label="Буфер обмена" width={101} launcher>
      <Big icon={<PasteIcon />} lines={['Вставить', '']} width={75} />
      <Stack $gap={6} $padding="4px 0 0">
        <PlainIcon aria-label="Вырезать"><CutIcon /></PlainIcon>
        <PlainIcon aria-label="Копировать"><CopyIcon /></PlainIcon>
        <PlainIcon aria-label="Формат по образцу"><BrushIcon /></PlainIcon>
      </Stack>
    </Group>

    <Group label="Шрифт" width={196} launcher>
      <Stack $gap={7}>
        <Row>
          <Combo label="Шрифт" value="Times New Rom" width={98} />
          <Combo label="Размер" value="12" width={43} />
          <ButtonSet>
            <ToolButton $gap={1} aria-label="Увеличить размер"><Glyph $size={18} $color="#333">A</Glyph><Raised><Arrow up /></Raised></ToolButton>
            <ToolButton $gap={2} $width={21} aria-label="Уменьшить размер"><Glyph $size={13} $color="#333">A</Glyph><Raised><Arrow /></Raised></ToolButton>
          </ButtonSet>
        </Row>
        <Row>
          <ButtonSet>
            <ToolButton $width={23}><Glyph>Ж</Glyph></ToolButton>
            <ToolButton $width={23}><Glyph $italic>К</Glyph></ToolButton>
            <ToolButton $width={32}><Glyph $underline>Ч</Glyph><Arrow /></ToolButton>
          </ButtonSet>
          <ButtonSet>
            <ToolButton $width={32} aria-label="Границы"><BorderIcon /><Arrow /></ToolButton>
          </ButtonSet>
          <ButtonSet>
            <ToolButton $width={32} aria-label="Цвет заливки"><FillIcon /><Arrow /></ToolButton>
            <ToolButton $width={32} aria-label="Цвет текста"><FontColorIcon /><Arrow /></ToolButton>
          </ButtonSet>
        </Row>
      </Stack>
    </Group>

    <Group label="Выравнивание" width={165} launcher>
      <Stack $gap={7}>
        <Row>
          <ButtonSet>
            <ToolButton $width={22} aria-label="По верхнему краю"><LinesIcon lines={wide} offset={2} /></ToolButton>
            <ToolButton $width={23} aria-label="По середине"><LinesIcon lines={wide} offset={5} /></ToolButton>
            <ToolButton $width={22} $active aria-label="По нижнему краю"><LinesIcon lines={wide} offset={8} /></ToolButton>
          </ButtonSet>
          <ButtonSet>
            <ToolButton $width={29} aria-label="Ориентация"><OrientationIcon /><Arrow /></ToolButton>
          </ButtonSet>
        </Row>
        <Row>
          <ButtonSet>
            <ToolButton $width={22} aria-label="По левому краю"><LinesIcon lines={[[0, 14], [0, 9], [0, 14], [0, 9], [0, 14], [0, 9]]} offset={2} /></ToolButton>
            <ToolButton $width={23} aria-label="По центру"><LinesIcon lines={[[0, 14], [3, 8], [0, 14], [3, 8], [0, 14], [3, 8]]} offset={2} /></ToolButton>
            <ToolButton $width={22} aria-label="По правому краю"><LinesIcon lines={[[0, 14], [5, 9], [0, 14], [5, 9], [0, 14], [5, 9]]} offset={2} /></ToolButton>
          </ButtonSet>
          <ButtonSet>
            <ToolButton $width={21} aria-label="Уменьшить отступ"><IndentIcon /></ToolButton>
            <ToolButton $width={22} aria-label="Увеличить отступ"><IndentIcon right /></ToolButton>
          </ButtonSet>
        </Row>
      </Stack>
      <Separator />
      <Stack $gap={7} $padding="9px 0 0 5px">
        <PlainButton aria-label="Перенос текста"><WrapIcon /></PlainButton>
        <PlainButton aria-label="Объединить"><MergeIcon /><Arrow /></PlainButton>
      </Stack>
    </Group>

    <Group label="Число" width={136} launcher>
      <Stack $gap={7}>
        <Combo label="Формат числа" value="Общий" width={128} />
        <Row>
          <ButtonSet>
            <ToolButton $width={33} aria-label="Денежный"><MoneyIcon /><Arrow /></ToolButton>
            <ToolButton $width={23}><Glyph $sans $size={12}>%</Glyph></ToolButton>
            <ToolButton $width={22}><Glyph $sans $size={10}>000</Glyph></ToolButton>
          </ButtonSet>
          <ButtonSet>
            <ToolButton $width={21} aria-label="Увеличить разрядность"><DecimalIcon /></ToolButton>
            <ToolButton $width={21} aria-label="Уменьшить разрядность"><DecimalIcon less /></ToolButton>
          </ButtonSet>
        </Row>
      </Stack>
    </Group>

    <Group label="Стили" width={249}>
      <Big icon={<ConditionalIcon />} lines={['Условное', 'форматирование']} width={112} />
      <Big icon={<FormatTableIcon />} lines={['Форматировать', 'как таблицу']} width={86} />
      <Big icon={<CellStyleIcon />} lines={['Стили', 'ячеек']} width={46} />
    </Group>

    <Group label="Ячейки" width={91}>
      <Stack $padding="1px 4px 0 6px">
        <PlainButton $gap={2}><CellsIcon kind="insert" />Вставить&nbsp;<Arrow /></PlainButton>
        <PlainButton $gap={2}><CellsIcon kind="delete" />Удалить&nbsp;<Arrow /></PlainButton>
        <PlainButton $gap={2}><CellsIcon kind="format" />Формат&nbsp;<Arrow /></PlainButton>
      </Stack>
    </Group>

    <Group label="Редактирование" width={173}>
      <Stack $padding="1px 6px 0 7px">
        <PlainButton aria-label="Сумма"><SumIcon /><Arrow /></PlainButton>
        <PlainButton aria-label="Заполнить"><FillDownIcon /><Arrow /></PlainButton>
        <PlainButton aria-label="Очистить"><EraserIcon /><Arrow /></PlainButton>
      </Stack>
      <Big icon={<SortIcon />} lines={['Сортировка', 'и фильтр']} width={66} />
      <Big icon={<BinocularsIcon />} lines={['Найти и', 'выделить']} width={66} />
    </Group>
  </Ribbon>
);

const PlainIcon = styled.button`
  width: 16px;
  height: 16px;
  margin-left: -8px;
`;

const Spreadsheet = () => (
  <SheetTable>
    <colgroup>
      <col width="29" />
      {columns.map((col, i) => (
        <col key={col} width={columnWidths[i]} />
      ))}
    </colgroup>
    <thead>
      <tr>
        <Corner aria-label="Выделить все">
          <svg width="12" height="12" viewBox="0 0 12 12">
            <path d="M12 0v12H0z" fill="#e4ecf7" />
          </svg>
        </Corner>
        {columns.map((col) => (
          <ColumnHead key={col} scope="col" $active={col === 'E'} $beforeActive={col === 'D'}>
            {col}
          </ColumnHead>
        ))}
      </tr>
    </thead>
    <tbody>
      {Array.from({ length: 32 }, (_, i) => i + 1).map((row) => (
        <tr key={row}>
          <RowHead scope="row" $active={row === 24} $height={rowHeights[row] || 21}>
            {row}
          </RowHead>
          {columns.map((col) => {
            const { value, props } = getCell(col, row);
            return (
              <Cell key={col} {...props}>
                {value}
                {col === 'E' && row === 24 && <Selection />}
              </Cell>
            );
          })}
        </tr>
      ))}
    </tbody>
  </SheetTable>
);

const App = () => (
  <>
    <GlobalStyle />
    <Window>
      <OfficeButton aria-label="Office">
        <OfficeLogo />
        <KeyTip $top={12}>Ф</KeyTip>
      </OfficeButton>

      <TitleBar>
        <TitleLeft>
          <QuickAccess>
            <QuickButton aria-label="Сохранить"><SaveIcon /><KeyTip>1</KeyTip></QuickButton>
            <QuickButton $wide aria-label="Отменить"><UndoIcon /><Arrow /><KeyTip>2</KeyTip></QuickButton>
            <QuickButton $wide disabled aria-label="Вернуть"><UndoIcon flip /><Arrow /><KeyTip>3</KeyTip></QuickButton>
            <QuickButton aria-label="Создать"><PageIcon /><KeyTip>4</KeyTip></QuickButton>
            <QuickButton aria-label="Открыть"><FolderIcon /><KeyTip>5</KeyTip></QuickButton>
            <QuickButton aria-label="Просмотр"><PageIcon lens /><KeyTip>6</KeyTip></QuickButton>
          </QuickAccess>
          <MoreButton aria-label="Настройка панели">
            <svg width="7" height="7" viewBox="0 0 7 7">
              <path d="M1 .5h5M1 3h5L3.500 6z" stroke="#15428b" fill="#15428b" strokeWidth=".8" />
            </svg>
          </MoreButton>
        </TitleLeft>
        <WindowTitle>
          Мои_Страны.xls  [Режим совместимости] <span> -  Microsoft Excel</span>
        </WindowTitle>
        <WindowControls $gap={9}>
          <ControlButton aria-label="Свернуть"><WinIcon kind="min" /></ControlButton>
          <ControlButton aria-label="Восстановить"><WinIcon kind="restore" /></ControlButton>
          <ControlButton aria-label="Закрыть"><WinIcon kind="close" /></ControlButton>
        </WindowControls>
      </TitleBar>

      <TabStrip>
        {tabs.map(([name, tip], i) => (
          <RibbonTab key={name} $active={i === 0}>
            {name}
            <KeyTip $top={14}>{tip}</KeyTip>
          </RibbonTab>
        ))}
        <WindowControls $gap={6}>
          <ControlButton aria-label="Справка"><HelpIcon /></ControlButton>
          <ControlButton aria-label="Свернуть книгу"><WinIcon kind="min" color="#666" /></ControlButton>
          <ControlButton aria-label="Восстановить книгу"><WinIcon kind="restore" color="#777" /></ControlButton>
          <ControlButton aria-label="Закрыть книгу"><WinIcon kind="close" color="#777" /></ControlButton>
        </WindowControls>
      </TabStrip>

      <RibbonGroups />

      <FormulaBar>
        <NameBox>
          <input aria-label="Имя ячейки" defaultValue="E24" />
          <button aria-label="Список имен">
            <svg width="7" height="4" viewBox="0 0 7 4"><path d="M0 0h7L3.500 4z" fill="#000" /></svg>
          </button>
        </NameBox>
        <FunctionPill>
          <Knob />
          <FxButton aria-label="Вставить функцию">f<small>x</small></FxButton>
        </FunctionPill>
        <FormulaInput aria-label="Строка формул" />
        <ExpandButton aria-label="Развернуть">
          <svg width="8" height="9" viewBox="0 0 8 9" fill="none">
            <path d="M1 1l3 3 3-3M1 5l3 3 3-3" stroke="#000" strokeWidth="1.500" />
          </svg>
        </ExpandButton>
      </FormulaBar>

      <SheetArea>
        <SheetView>
          <Spreadsheet />
        </SheetView>
        <VerticalBar>
          <SplitHandle />
          <ScrollArrow aria-label="Вверх"><Triangle points="M0 6l4-4 4 4z" /></ScrollArrow>
          <VerticalThumb><Grip vertical /></VerticalThumb>
          <VerticalTrack />
          <ScrollArrow aria-label="Вниз"><Triangle points="M0 2h8L4 6z" /></ScrollArrow>
        </VerticalBar>
      </SheetArea>

      <BottomBar>
        <SheetNav>
          <button aria-label="Первый"><Triangle points="M0 0h2v8H0zM7 0v8L3 4z" color="#15428b" size={7} /></button>
          <button aria-label="Предыдущий"><Triangle points="M6 0v8L2 4z" color="#15428b" size={7} /></button>
          <button aria-label="Следующий"><Triangle points="M2 0v8l4-4z" color="#15428b" size={7} /></button>
          <button aria-label="Последний"><Triangle points="M6 0h2v8H6zM1 0v8l4-4z" color="#15428b" size={7} /></button>
        </SheetNav>
        <SheetTabs>
          <SheetTab $first>Лист1</SheetTab>
          <SheetTab>Лист2</SheetTab>
          <SheetTab>Лист3</SheetTab>
          <SheetTab>Лист4</SheetTab>
          <SheetTab $active $width={75}>Лист1 (2)</SheetTab>
          <SheetTab>Лист5</SheetTab>
          <SheetTab $width={32} aria-label="Вставить лист"><NewSheetIcon /></SheetTab>
        </SheetTabs>
        <HorizontalBar>
          <SplitHandle $vertical />
          <ScrollArrow $horizontal aria-label="Влево"><Triangle points="M6 0v8L2 4z" /></ScrollArrow>
          <HorizontalThumb><Grip /></HorizontalThumb>
          <HorizontalTrack />
          <ScrollArrow $horizontal aria-label="Вправо"><Triangle points="M2 0v8l4-4z" /></ScrollArrow>
          <SplitHandle $vertical />
          <ScrollArrow as="span" $horizontal />
        </HorizontalBar>
      </BottomBar>

      <StatusBar>
        <StatusItem>Готово</StatusItem>
        <StatusItem>
          <button aria-label="Запись макроса"><MacroIcon /></button>
        </StatusItem>
        <StatusRight>
          <ViewButtons>
            <ViewButton $active aria-label="Обычный"><ViewIcon kind="grid" /></ViewButton>
            <ViewButton aria-label="Разметка"><ViewIcon kind="page" /></ViewButton>
            <ViewButton aria-label="Страничный"><ViewIcon kind="break" /></ViewButton>
          </ViewButtons>
          <ZoomValue>100%</ZoomValue>
          <button aria-label="Уменьшить"><ZoomIcon /></button>
          <ZoomSlider type="range" min="0" max="100" defaultValue="50" aria-label="Масштаб" />
          <button aria-label="Увеличить"><ZoomIcon plus /></button>
        </StatusRight>
      </StatusBar>
      <TaskStrip />
    </Window>
  </>
);

export default App;
